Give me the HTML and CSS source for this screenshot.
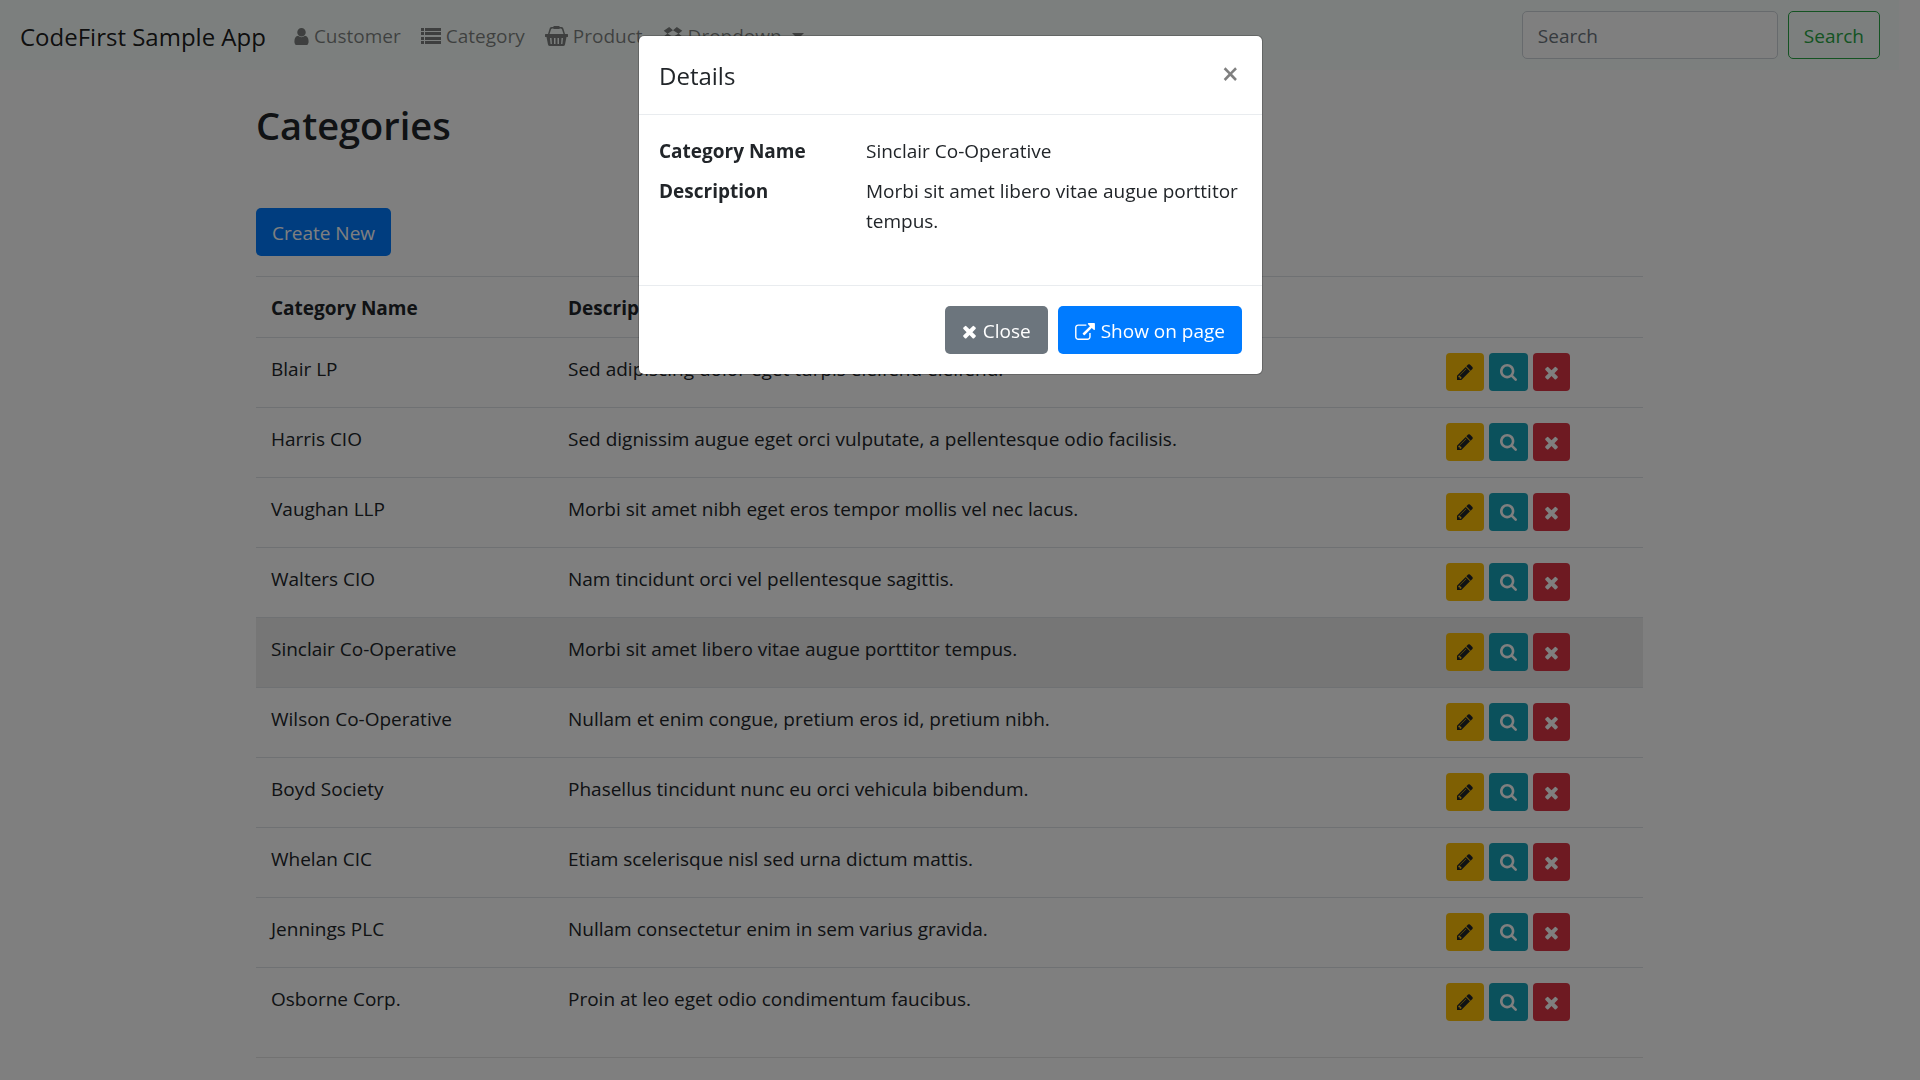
FILE: index.html
```html
<!DOCTYPE html>
<html lang="en">
<head>
<meta charset="utf-8">
<title>Categories - CodeFirst Sample App</title>
<link rel="stylesheet" href="styles.css">
</head>
<body>
<svg class="sprite" aria-hidden="true">
  <symbol id="i-user" viewBox="256 128 1280 1536"><path d="M1536 1399q0 109-62.500 187t-150.500 78h-854q-88 0-150.500-78t-62.500-187q0-85 8.500-160.500t31.500-152 58.500-131 94-89 134.500-34.500q131 128 313 128t313-128q76 0 134.500 34.500t94 89 58.500 131 31.500 152 8.500 160.500zm-256-887q0 159-112.500 271.500t-271.500 112.500-271.500-112.500-112.500-271.500 112.500-271.500 271.500-112.500 271.500 112.500 112.500 271.500z"/></symbol>
  <symbol id="i-list" viewBox="0 0 20 16"><path d="M0 0h3v3H0zM4 0h16v3H4zM0 4h3v3H0zM4 4h16v3H4zM0 9h3v3H0zM4 9h16v3H4zM0 13h3v3H0zM4 13h16v3H4z"/></symbol>
  <symbol id="i-basket" viewBox="0 0 23 20"><path d="M9 0h5l1 1c2 0 3 0 3.500 2L20 8h-1.500L17 3.500c-.3-1-.8-1-2-1L14 3H9L8 2.500c-1.200 0-1.700 0-2 1L4.500 8H3l1.500-5C5 1 6 1 8 1z"/><path fill-rule="evenodd" d="M1 8h21a1 1 0 0 1 0 3h-.5L20 18.500Q19.700 20 18 20H5Q3.300 20 3 18.500L1.500 11H1a1 1 0 0 1 0-3zM5 12l.6 6h1.300L6.500 12zM9 12v6h1.500v-6zM12.500 12v6H14v-6zM16.500 12l-.4 6h1.300l.6-6z"/></symbol>
  <symbol id="i-dropbox" viewBox="0 0 1792 1600"><path d="M402 580l494 305-342 285-490-319zm986 555v108l-490 293v1l-1-1-1 1v-1l-489-293v-108l147 96 342-284v-2l1 1 1-1v2l343 284zM554 1l342 285-494 304-338-270zm836 579l338 271-489 319-343-285zM1239 1l489 319-338 270-494-304z"/></symbol>
  <symbol id="i-times" viewBox="192 192 1408 1408"><path d="M1490 1322q0 40-28 68l-136 136q-28 28-68 28t-68-28l-294-294-294 294q-28 28-68 28t-68-28l-136-136q-28-28-28-68t28-68l294-294-294-294q-28-28-28-68t28-68l136-136q28-28 68-28t68 28l294 294 294-294q28-28 68-28t68 28l136 136q28 28 28 68t-28 68l-294 294 294 294q28 28 28 68z"/></symbol>
  <symbol id="i-pencil" viewBox="128 128 1536 1536"><path d="M491 1536l91-91-235-235-91 91v107h128v128h107zm523-928q0-22-22-22-10 0-17 7l-542 542q-7 7-7 17 0 22 22 22 10 0 17-7l542-542q7-7 7-17zm-54-192l416 416-832 832h-416v-416zm683 96q0 53-37 90l-166 166-416-416 166-165q36-38 90-38 53 0 91 38l235 234q37 39 37 91z"/></symbol>
  <symbol id="i-search" viewBox="64 128 1664 1664"><path d="M1216 832q0-185-131.500-316.500t-316.500-131.500-316.500 131.500-131.500 316.500 131.500 316.500 316.500 131.500 316.500-131.500 131.500-316.500zm512 832q0 52-38 90t-90 38q-54 0-90-38l-343-342q-179 124-399 124-143 0-273.500-55.500t-225-150-150-225-55.500-273.500 55.500-273.500 150-225 225-150 273.500-55.500 273.500 55.500 225 150 150 225 55.500 273.500q0 220-124 399l343 343q37 37 37 90z"/></symbol>
  <symbol id="i-external" viewBox="0 0 1792 1536"><path d="M1408 928v320q0 119-84.500 203.500t-203.500 84.500h-832q-119 0-203.500-84.500t-84.500-203.500v-832q0-119 84.500-203.500t203.500-84.500h704q14 0 23 9t9 23v64q0 14-9 23t-23 9h-704q-66 0-113 47t-47 113v832q0 66 47 113t113 47h832q66 0 113-47t47-113v-320q0-14 9-23t23-9h64q14 0 23 9t9 23zm384-864v512q0 26-19 45t-45 19-45-19l-176-176-652 652q-10 10-23 10t-23-10l-114-114q-10-10-10-23t10-23l652-652-176-176q-19-19-19-45t19-45 45-19h512q26 0 45 19t19 45z"/></symbol>
</svg>

<nav class="navbar">
  <a class="brand" href="#">CodeFirst Sample App</a>
  <ul class="nav">
    <li><a class="nav-link" href="#"><svg class="icon-user"><use href="#i-user"/></svg>Customer</a></li>
    <li><a class="nav-link" href="#"><svg class="icon-list"><use href="#i-list"/></svg>Category</a></li>
    <li><a class="nav-link" href="#"><svg class="icon-basket"><use href="#i-basket"/></svg>Product</a></li>
    <li><a class="nav-link" href="#"><svg class="icon-dropbox"><use href="#i-dropbox"/></svg>Dropdown<span class="caret"></span></a></li>
  </ul>
  <form class="search">
    <input class="search-input" type="search" placeholder="Search" aria-label="Search">
    <button class="btn btn-outline" type="button">Search</button>
  </form>
</nav>

<main class="container">
  <h2 class="title">Categories</h2>
  <a class="btn btn-primary" href="#">Create New</a>
  <table class="table">
    <thead>
      <tr><th class="col-name" scope="col">Category Name</th><th scope="col">Description</th><th class="col-actions"></th></tr>
    </thead>
    <tbody id="rows"></tbody>
  </table>
  <hr class="rule">
</main>

<div class="backdrop"></div>
<div class="modal" role="dialog" aria-modal="true" aria-labelledby="modal-title">
  <div class="modal-content">
    <div class="modal-header">
      <h5 class="modal-title" id="modal-title">Details</h5>
      <button class="close" type="button" aria-label="Close">×</button>
    </div>
    <dl class="modal-body">
      <dt>Category Name</dt><dd>Sinclair Co-Operative</dd>
      <dt>Description</dt><dd>Morbi sit amet libero vitae augue porttitor tempus.</dd>
    </dl>
    <div class="modal-footer">
      <button class="btn btn-secondary" type="button"><svg class="icon-times"><use href="#i-times"/></svg>Close</button>
      <a class="btn btn-primary" href="#"><svg class="icon-external"><use href="#i-external"/></svg>Show on page</a>
    </div>
  </div>
</div>
<script src="script.js"></script>
</body>
</html>
```
FILE: script.js
```js
const categories = [
  ["Blair LP", "Sed adipiscing dolor eget turpis eleifend eleifend."],
  ["Harris CIO", "Sed dignissim augue eget orci vulputate, a pellentesque odio facilisis."],
  ["Vaughan LLP", "Morbi sit amet nibh eget eros tempor mollis vel nec lacus."],
  ["Walters CIO", "Nam tincidunt orci vel pellentesque sagittis."],
  ["Sinclair Co-Operative", "Morbi sit amet libero vitae augue porttitor tempus."],
  ["Wilson Co-Operative", "Nullam et enim congue, pretium eros id, pretium nibh."],
  ["Boyd Society", "Phasellus tincidunt nunc eu orci vehicula bibendum."],
  ["Whelan CIC", "Etiam scelerisque nisl sed urna dictum mattis."],
  ["Jennings PLC", "Nullam consectetur enim in sem varius gravida."],
  ["Osborne Corp.", "Proin at leo eget odio condimentum faucibus."]
];
const selected = "Sinclair Co-Operative";
const action = (kind, icon, label) =>
  `<button class="btn-sm btn-${kind}" type="button" aria-label="${label}"><svg class="icon-${icon}"><use href="#i-${icon}"/></svg></button>`;

document.getElementById("rows").innerHTML = categories.map(([name, text]) => `
  <tr${name === selected ? ' class="active"' : ""}>
    <td>${name}</td>
    <td>${text}</td>
    <td><div class="actions">${action("edit", "pencil", "Edit")}${action("view", "search", "Details")}${action("delete", "times", "Delete")}</div></td>
  </tr>`).join("");
```
FILE: styles.css
```css
* { box-sizing: border-box; }

body {
  margin: 0;
  padding-right: 21px;
  overflow: hidden;
  background: #fff;
  color: #212529;
  font-family: "Open Sans", "Noto Sans", sans-serif;
  font-size: 19px;
  line-height: 30px;
}

a { text-decoration: none; }
button, input { font: inherit; }
svg { fill: currentColor; flex: none; }
.sprite { display: none; }

.navbar {
  display: flex;
  align-items: center;
  min-height: 70px;
  padding: 0 19px 0 20px;
  background: #f8fffc;
}
.brand { margin-right: 18px; padding-top: 3px; color: rgba(0, 0, 0, .9); font-size: 24px; }
.nav { display: flex; margin: 0; padding: 0; list-style: none; }
.nav-link {
  display: flex;
  align-items: center;
  gap: 5px;
  padding: 11px 10px 9px;
  color: rgba(0, 0, 0, .5);
}
.icon-user { width: 15px; height: 17px; }
.icon-list { width: 20px; height: 16px; }
.icon-basket { width: 23px; height: 20px; }
.icon-dropbox { width: 20px; height: 18px; }
.caret {
  margin-left: 5px;
  border: 6px solid transparent;
  border-top-color: currentColor;
  border-bottom: 0;
}
.search { display: flex; gap: 10px; margin-left: auto; }
.search-input {
  width: 256px;
  height: 48px;
  padding: 10px 15px 8px;
  border: 1px solid #ced4da;
  border-radius: 5px;
  background: #fff;
}
.search-input::placeholder { color: #6c757d; opacity: 1; }

.btn {
  display: inline-flex;
  align-items: center;
  gap: 5px;
  height: 48px;
  padding: 2px 15px 0;
  border: 1px solid transparent;
  border-radius: 5px;
  color: #fff;
}
.btn-primary { background: #007bff; }
.btn-secondary { background: #6c757d; }
.btn-outline { border-color: #28a745; background: transparent; color: #28a745; }

.container { max-width: 1425px; margin: 0 auto; padding: 0 19px; }
.title {
  margin: 31px 0 59px;
  font-size: 38px;
  font-weight: 600;
  line-height: 48px;
}
.table {
  width: 100%;
  margin-top: 20px;
  border-spacing: 0;
  line-height: 32px;
  table-layout: fixed;
}
.col-name { width: 297px; }
.col-actions { width: 212px; }
.table th, .table td {
  padding: 15px 15px 13px;
  border-top: 1px solid #dee2e6;
  text-align: left;
  vertical-align: top;
}
.table td { padding-bottom: 16px; }
.active { background: rgba(0, 0, 0, .075); }
.actions { display: flex; gap: 5px; }
.btn-sm {
  display: flex;
  align-items: center;
  height: 38px;
  padding: 0 10px;
  border: 1px solid transparent;
  border-radius: 4px;
  color: #fff;
}
.btn-edit { background: #ffc107; color: #212529; }
.btn-view { background: #17a2b8; }
.btn-delete { background: #dc3545; }
.icon-pencil { width: 16px; height: 16px; }
.icon-search { width: 17px; height: 17px; }
.icon-times { width: 15px; height: 15px; }
.icon-external { width: 20px; height: 17px; }
.rule { margin: 20px 0; border: 0; border-top: 1px solid rgba(0, 0, 0, .1); }

.backdrop { position: fixed; inset: 0; background: rgba(0, 0, 0, .5); }
.modal { position: fixed; inset: 0 19px 0 0; padding-top: 35px; }
.modal-content {
  max-width: 625px;
  margin: 0 auto;
  border: 1px solid rgba(0, 0, 0, .2);
  border-radius: 6px;
  background: #fff;
  background-clip: padding-box;
}
.modal-header {
  display: flex;
  align-items: flex-start;
  justify-content: space-between;
  padding: 20px;
  border-bottom: 1px solid #e9ecef;
}
.modal-title { margin: 0; font-size: 24px; font-weight: 500; line-height: 40px; height: 38px; }
.close {
  padding: 3px;
  border: 0;
  background: none;
  color: rgba(0, 0, 0, .5);
  font-size: 30px;
  font-weight: 600;
  line-height: 30px;
}
.modal-body {
  display: grid;
  grid-template-columns: 207px 1fr;
  row-gap: 10px;
  margin: 0;
  padding: 21px 20px 49px;
}
.modal-body dt { font-weight: 700; }
.modal-body dd { margin: 0; }
.modal-footer {
  display: flex;
  justify-content: flex-end;
  gap: 10px;
  padding: 20px;
  border-top: 1px solid #e9ecef;
}
.modal-footer .btn { gap: 6px; padding: 2px 16px 0; }
```
